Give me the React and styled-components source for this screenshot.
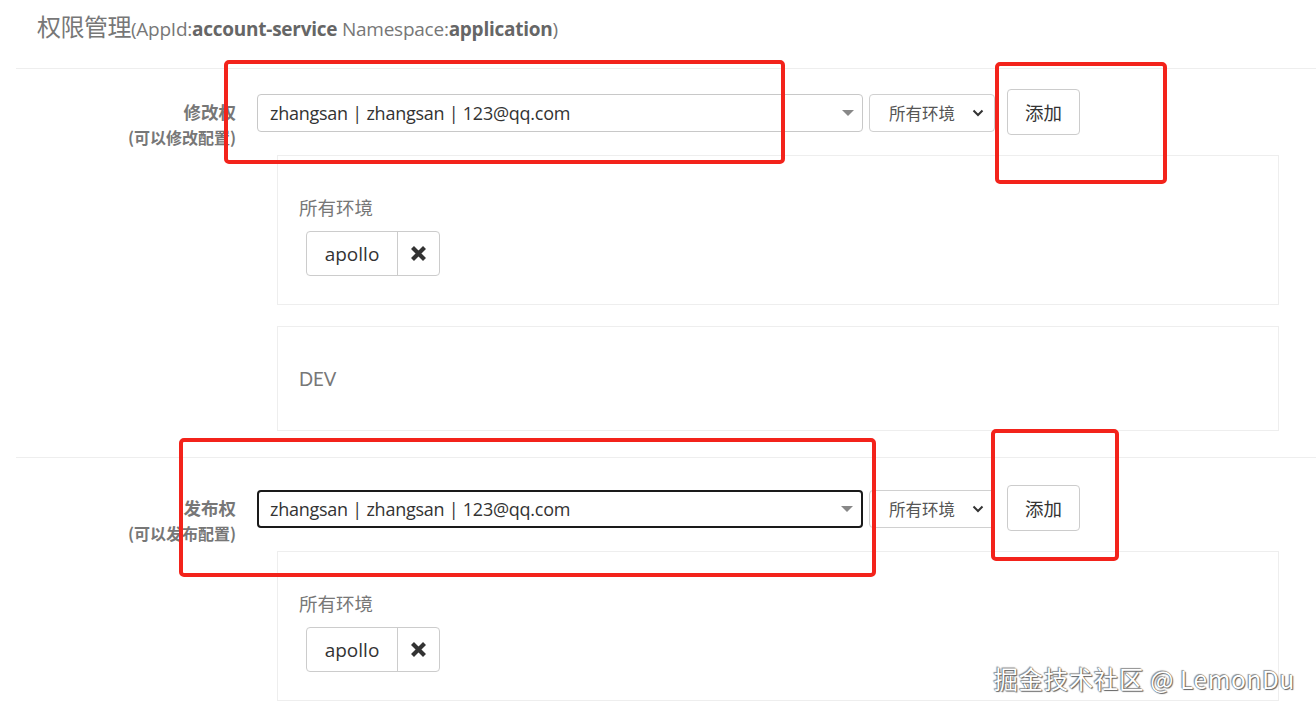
import React from "react";
import styled, { createGlobalStyle } from "styled-components";

const GlobalStyle = createGlobalStyle`
  html, body { margin: 0; padding: 0; background: #fff; overflow: hidden; }
  body { font-family: "Open Sans", "Noto Sans CJK SC", sans-serif; color: #333; }
  * { box-sizing: border-box; }
`;

const Page = styled.div`
  position: relative;
  width: 1316px;
  height: 715px;
  padding-left: 16px;
  overflow: hidden;
`;

const Header = styled.div`
  height: 69px;
  padding: 11px 0 0 21px;
  border-bottom: 1px solid #eee;
`;

const Title = styled.h1`
  margin: 0;
  font-weight: 400;
  font-size: 24px;
  line-height: 30px;
  color: #777;
  font-family: "Noto Sans CJK SC", sans-serif;
  letter-spacing: -0.5px;
`;

const Sub = styled.span`
  font-family: "Open Sans", "Noto Sans CJK SC", sans-serif;
  font-size: 19px;
  letter-spacing: -0.25px;
  color: #777;
`;

const Strong = styled.b`
  font-weight: 700;
  color: #666;
`;

const Section = styled.section`
  padding-top: ${(p) => p.$top}px;
  padding-bottom: ${(p) => p.$bottom}px;
  border-bottom: ${(p) => (p.$line ? "1px solid #eee" : "none")};
`;

const Row = styled.div`
  display: flex;
  align-items: flex-start;
  height: 46px;
`;

const LabelCol = styled.div`
  width: 220px;
  margin-right: 21px;
  margin-top: 11px;
  text-align: right;
  font-family: "Noto Sans CJK SC", sans-serif;
  font-weight: 700;
  color: #777;
`;

const LabelMain = styled.div`
  font-size: 17.5px;
  line-height: 24px;
`;

const LabelHint = styled.div`
  font-size: 16px;
  line-height: 26px;
`;

const Controls = styled.div`
  display: flex;
  align-items: center;
  height: 46px;
`;

const UserSelect = styled.div`
  position: relative;
  width: 606px;
  height: 38px;
  margin-top: 1px;
  border: ${(p) => (p.$focused ? "2px solid #1a1a1a" : "1px solid #c8c8c8")};
  border-radius: 4px;
  display: flex;
  align-items: center;
  padding-left: ${(p) => (p.$focused ? 11 : 12)}px;
  font-size: 18px;
  color: #333;
  letter-spacing: -0.25px;
`;

const Caret = styled.span`
  position: absolute;
  right: 8px;
  top: 50%;
  margin-top: -3px;
  width: 0;
  height: 0;
  border-left: 6px solid transparent;
  border-right: 6px solid transparent;
  border-top: 6px solid #888;
`;

const EnvSelect = styled.div`
  width: 126px;
  height: 38px;
  margin-top: 1px;
  margin-left: 6px;
  border: 1px solid #d0d0d0;
  border-radius: 4px;
  display: flex;
  align-items: center;
  justify-content: space-between;
  padding: 0 10px 0 19px;
  font-family: "Noto Sans CJK SC", sans-serif;
  font-size: 16.5px;
  color: #555;
`;

const AddButton = styled.button`
  width: 73px;
  height: 46px;
  margin-left: 12px;
  border: 1px solid #ccc;
  border-radius: 4px;
  background: #fff;
  font-family: "Noto Sans CJK SC", sans-serif;
  font-size: 18.5px;
  color: #333;
  padding: 0;
`;

const Panels = styled.div`
  margin-left: 261px;
  margin-top: ${(p) => p.$top}px;
  width: 1002px;
  display: flex;
  flex-direction: column;
  gap: 21px;
`;

const Panel = styled.div`
  border: 1px solid #eee;
  padding: 40px 21px 28px;
`;

const PanelTitle = styled.div`
  font-family: "Lato", "Noto Sans CJK SC", sans-serif;
  font-size: 18.5px;
  line-height: 24px;
  color: #777;
  margin-bottom: 11px;
`;

const TagGroup = styled.div`
  display: inline-flex;
  margin-left: 7px;
  height: 45px;
  border: 1px solid #ccc;
  border-radius: 4px;
  overflow: hidden;
`;

const TagName = styled.span`
  width: 91px;
  display: flex;
  align-items: center;
  justify-content: center;
  font-family: "Open Sans", sans-serif;
  font-size: 19px;
  color: #333;
  border-right: 1px solid #ccc;
`;

const TagRemove = styled.span`
  width: 41px;
  display: flex;
  align-items: center;
  justify-content: center;
`;

const Annotation = styled.div`
  position: absolute;
  left: ${(p) => p.$x}px;
  top: ${(p) => p.$y}px;
  width: ${(p) => p.$w}px;
  height: ${(p) => p.$h}px;
  border: 4px solid #f3231b;
  border-radius: 5px;
  pointer-events: none;
`;

const Watermark = styled.div`
  position: absolute;
  right: 21px;
  top: 662px;
  font-family: "Noto Sans CJK SC", sans-serif;
  font-size: 24.5px;
  line-height: 34px;
  color: #fff;
  letter-spacing: 0.6px;
  text-shadow: 0 0 1px #444, 1px 1px 1px #666, -1px -1px 1px #999;
`;

const Chevron = () => (
  <svg width="12" height="8" viewBox="0 0 12 8">
    <polyline points="1.5,1.5 6,6 10.5,1.5" fill="none" stroke="#333" strokeWidth="2" />
  </svg>
);

const XIcon = () => (
  <svg width="17" height="17" viewBox="0 0 17 17">
    <path d="M2.5 2.5 L14.5 14.5 M14.5 2.5 L2.5 14.5" stroke="#333" strokeWidth="4.2" strokeLinecap="butt" />
  </svg>
);

const Tag = ({ name }) => (
  <TagGroup>
    <TagName>{name}</TagName>
    <TagRemove>
      <XIcon />
    </TagRemove>
  </TagGroup>
);

const PermissionRow = ({ title, hint, focused }) => (
  <Row>
    <LabelCol>
      <LabelMain>{title}</LabelMain>
      <LabelHint>{hint}</LabelHint>
    </LabelCol>
    <Controls>
      <UserSelect $focused={focused}>
        zhangsan | zhangsan | 123@qq.com
        <Caret />
      </UserSelect>
      <EnvSelect>
        所有环境
        <Chevron />
      </EnvSelect>
      <AddButton>添加</AddButton>
    </Controls>
  </Row>
);

export default function App() {
  return (
    <>
      <GlobalStyle />
      <Page>
        <Header>
          <Title>
            权限管理
            <Sub>
              (AppId:<Strong>account-service</Strong> Namespace:<Strong>application</Strong>)
            </Sub>
          </Title>
        </Header>

        <Section $top={20} $bottom={26} $line>
          <PermissionRow title="修改权" hint="(可以修改配置)" />
          <Panels $top={20}>
            <Panel>
              <PanelTitle>所有环境</PanelTitle>
              <Tag name="apollo" />
            </Panel>
            <Panel>
              <PanelTitle>DEV</PanelTitle>
            </Panel>
          </Panels>
        </Section>

        <Section $top={27} $bottom={20}>
          <PermissionRow title="发布权" hint="(可以发布配置)" focused />
          <Panels $top={20}>
            <Panel>
              <PanelTitle>所有环境</PanelTitle>
              <Tag name="apollo" />
            </Panel>
          </Panels>
        </Section>

        <Annotation $x={224} $y={60} $w={561} $h={104} />
        <Annotation $x={995} $y={62} $w={172} $h={122} />
        <Annotation $x={179} $y={438} $w={697} $h={139} />
        <Annotation $x={991} $y={429} $w={128} $h={132} />

        <Watermark>掘金技术社区 @ LemonDu</Watermark>
      </Page>
    </>
  );
}
